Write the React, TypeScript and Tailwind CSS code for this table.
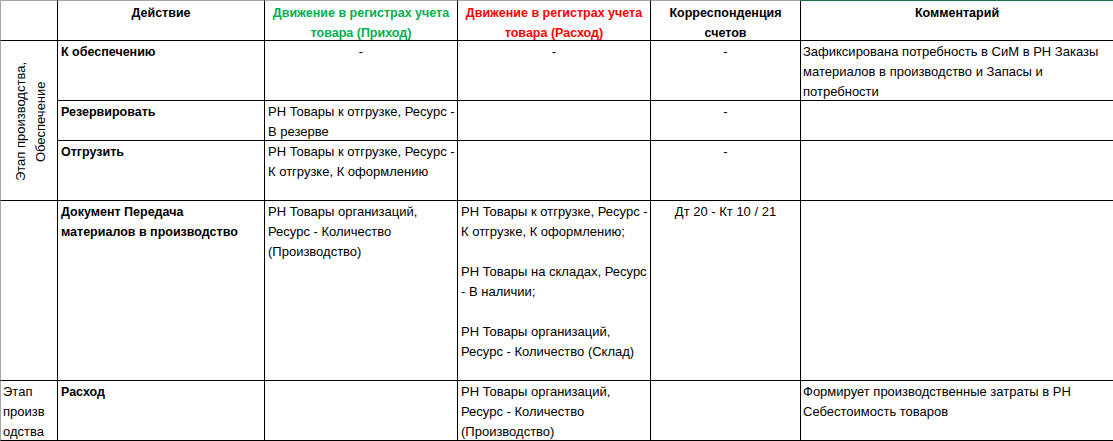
import React from "react";

const font = { fontFamily: '"Liberation Sans", Arial, sans-serif' };

// cell base: black grid line on the right and bottom, like a worksheet
const cell = "border-r border-b border-black px-[3px] pt-[1px] leading-[20px] text-[13px] text-black whitespace-nowrap overflow-visible";
const last = "border-b border-black pl-[2px] pt-[1px] leading-[20px] text-[13px] text-black whitespace-nowrap overflow-visible";
const head = "border-t border-t-[#a6a6a6] border-r border-b border-black pt-[2px] leading-[20px] text-[12.5px] font-bold text-center whitespace-nowrap";
const bold = "font-bold text-[12.5px]";

export default function App() {
  return (
    <div className="w-[1113px] h-[441px] bg-white overflow-hidden" style={font}>
      <div className="grid grid-cols-[58px_207px_193px_193px_150px_1fr] grid-rows-[41px_60px_40px_60px_180px_60px]">
        {/* header */}
        <div className={`${head} border-l border-l-[#a6a6a6]`} />
        <div className={head}>Действие</div>
        <div className={`${head} text-[#00b050]`}>
          Движение в регистрах учета
          <br />
          товара (Приход)
        </div>
        <div className={`${head} text-[#ff0000]`}>
          Движение в регистрах учета
          <br />
          товара (Расход)
        </div>
        <div className={head}>
          Корреспонденция
          <br />
          счетов
        </div>
        <div className="border-t border-t-[#1e7145] border-b border-black pt-[2px] leading-[20px] text-[12.5px] font-bold text-center">
          Комментарий
        </div>

        {/* merged stage cell */}
        <div className="row-span-3 border-l border-l-[#a6a6a6] border-r border-b border-black flex items-center justify-center pl-[4px] pt-[2px]">
          <div className="[writing-mode:vertical-rl] rotate-180 text-center text-[13px] leading-[20px] whitespace-nowrap text-black">
            Этап производства,
            <br />
            Обеспечение
          </div>
        </div>

        {/* row 1 */}
        <div className={cell}>
          <span className={bold}>К обеспечению</span>
        </div>
        <div className={`${cell} text-center`}>-</div>
        <div className={`${cell} text-center`}>-</div>
        <div className={`${cell} text-center`}>-</div>
        <div className={last}>
          Зафиксирована потребность в СиМ в РН Заказы
          <br />
          материалов в производство и Запасы и
          <br />
          потребности
        </div>

        {/* row 2 */}
        <div className={cell}>
          <span className={bold}>Резервировать</span>
        </div>
        <div className={cell}>
          РН Товары к отгрузке, Ресурс -
          <br />В резерве
        </div>
        <div className={cell} />
        <div className={`${cell} text-center`}>-</div>
        <div className={last} />

        {/* row 3 */}
        <div className={cell}>
          <span className={bold}>Отгрузить</span>
        </div>
        <div className={cell}>
          РН Товары к отгрузке, Ресурс -
          <br />К отгрузке, К оформлению
        </div>
        <div className={cell} />
        <div className={`${cell} text-center`}>-</div>
        <div className={last} />

        {/* row 4 */}
        <div className={`${cell} border-l border-l-[#a6a6a6]`} />
        <div className={cell}>
          <div className={bold}>
            Документ Передача
            <br />
            материалов в производство
          </div>
        </div>
        <div className={cell}>
          РН Товары организаций,
          <br />
          Ресурс - Количество
          <br />
          (Производство)
        </div>
        <div className={cell}>
          РН Товары к отгрузке, Ресурс -
          <br />К отгрузке, К оформлению;
          <br />
          <br />
          РН Товары на складах, Ресурс
          <br />- В наличии;
          <br />
          <br />
          РН Товары организаций,
          <br />
          Ресурс - Количество (Склад)
        </div>
        <div className={`${cell} text-center`}>Дт 20 - Кт 10 / 21</div>
        <div className={last} />

        {/* row 5 */}
        <div className={`${cell} border-l border-l-[#a6a6a6] pl-[2px]`}>
          Этап
          <br />
          произв
          <br />
          одства
        </div>
        <div className={cell}>
          <span className={bold}>Расход</span>
        </div>
        <div className={cell} />
        <div className={cell}>
          РН Товары организаций,
          <br />
          Ресурс - Количество
          <br />
          (Производство)
        </div>
        <div className={cell} />
        <div className={last}>
          Формирует производственные затраты в РН
          <br />
          Себестоимость товаров
        </div>
      </div>
    </div>
  );
}
